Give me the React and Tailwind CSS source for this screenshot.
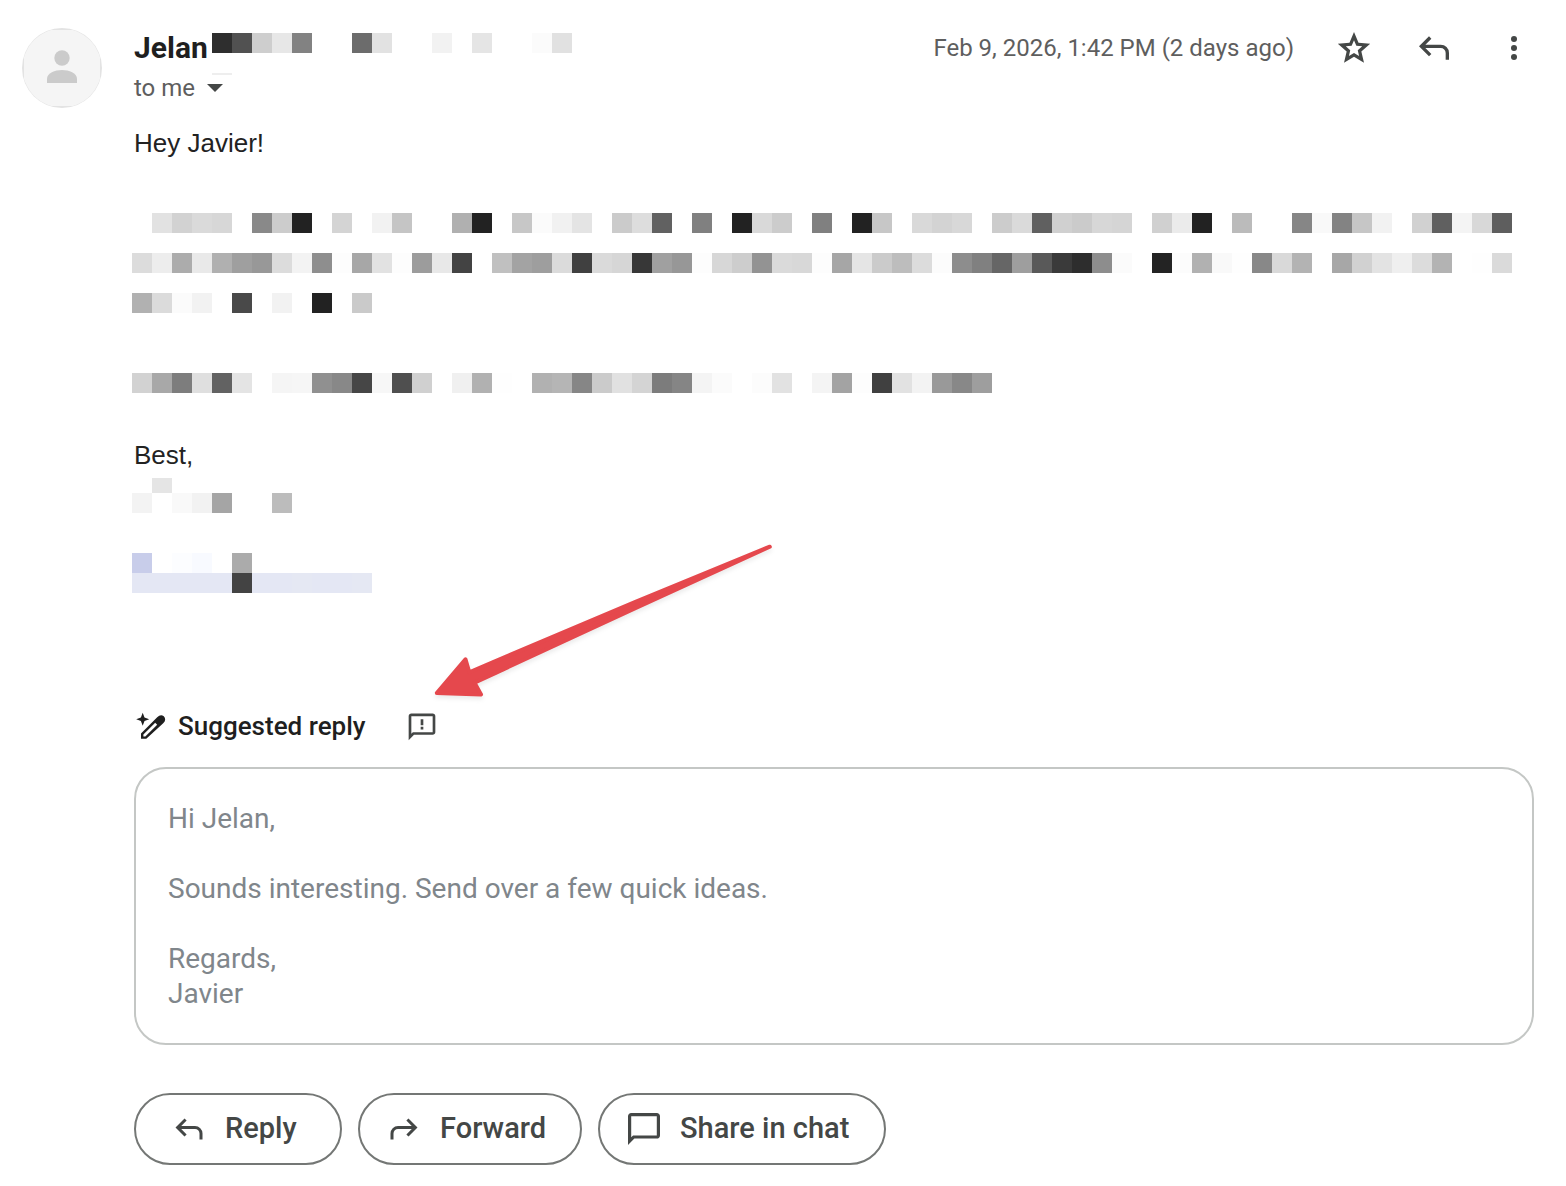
import React from "react";

// One entry per 20px cell, "-" is an empty cell
const senderCells = "2e 51 ce e7 82 - - 6c e2 - - f2 - e5 - - fb e1";

const bodyLines = [
  "- e2 d2 da d7 - 89 cc 22 - d4 - f2 c5 - - b0 22 - c7 fb f1 e4 - cb dd 61 - 80 - 22 d9 cc - 80 - 22 c7 - d9 d3 d8 - cc da 60 d0 cb d7 d5 - d0 eb 22 - bb - - 86 f9 83 c6 f2 - d1 60 f4 d8 5e",
  "dc ed ac e9 b0 9f 98 dc f3 8e fd a7 e2 fd 9c e8 43 - c0 a3 9e db 40 da d6 37 a0 97 fd d7 cd 93 da d8 fd a6 e5 cb bd dc fc 8d 80 66 9e 59 3a 2d 8d fb - 23 fc b1 f9 fe 88 d9 b3 - a7 d1 e3 ef dc b3 - fe da",
  "b1 db fb f2 - 49 - f2 - 22 - ca",
];

const closingLine =
  "d2 a8 7d df 62 e4 - f5 f6 90 88 46 f7 4f d0 - f0 b1 fe - b1 b5 86 cb e1 d4 7c 85 f4 fb - fc e2 - f4 a3 fd 40 e2 f3 99 88 9e";

const linkLines = [
  "c8cdea - fcfdff f8faff - ab",
  "e4e7f4 e4e7f4 e4e7f4 e4e7f4 e4e7f4 43 e4e7f4 e4e7f4 e5e8f3 e4e7f4 e4e7f4 e5e8f3",
];

// Two digit cells are greys, six digit cells are full colours
function cellColor(cell) {
  if (cell === "-") return "transparent";
  return cell.length === 2 ? `#${cell}${cell}${cell}` : `#${cell}`;
}

function RedactedLine({ cells, height = "h-5" }) {
  return (
    <div className={`flex shrink-0 ${height}`} aria-hidden="true">
      {cells.split(" ").map((cell, index) => (
        <span
          key={index}
          className="w-5 shrink-0"
          style={{ backgroundColor: cellColor(cell) }}
        />
      ))}
    </div>
  );
}

function Avatar() {
  return (
    <svg className="w-20 h-20 shrink-0" viewBox="0 0 80 80" aria-hidden="true">
      <clipPath id="avatar-square">
        <rect x="2" y="2" width="76" height="76" />
      </clipPath>
      <circle cx="40" cy="40" r="40" fill="#e3e3e3" />
      <circle
        cx="40"
        cy="40"
        r="39.5"
        fill="#f5f5f5"
        clipPath="url(#avatar-square)"
      />
      <circle cx="40" cy="30" r="7.7" fill="#cbcbcb" />
      <path
        d="M25 55v-4.500c0-5.200 8-8.500 15-8.500s15 3.300 15 8.500V55z"
        fill="#cbcbcb"
      />
    </svg>
  );
}

function StarIcon() {
  return (
    <svg
      className="w-10 h-10"
      viewBox="-15 -940 990 990"
      fill="currentColor"
      aria-hidden="true"
    >
      <path d="m354-247 126-76 126 77-33-144 111-96-146-13-58-136-58 135-146 13 111 97-33 143ZM233-80l65-281L80-550l288-25 112-265 112 265 288 25-218 189 65 281-247-149L233-80Z" />
    </svg>
  );
}

function ReplyIcon({ className }) {
  return (
    <svg
      className={className}
      viewBox="0 -960 960 960"
      fill="currentColor"
      aria-hidden="true"
    >
      <path d="M760-200v-160q0-50-35-85t-85-35H273l144 144-57 56-240-240 240-240 57 56-144 144h367q83 0 141.500 58.500T840-360v160h-80Z" />
    </svg>
  );
}

function MoreIcon() {
  return (
    <svg
      className="w-10 h-10"
      viewBox="0 0 40 40"
      fill="currentColor"
      aria-hidden="true"
    >
      <circle cx="20" cy="10.900" r="3" />
      <circle cx="20" cy="20" r="3" />
      <circle cx="20" cy="29.100" r="3" />
    </svg>
  );
}

function ChatIcon() {
  return (
    <svg
      className="w-10 h-10"
      viewBox="-20 -980 1000 1000"
      fill="currentColor"
      aria-hidden="true"
    >
      <path d="M80-80v-720q0-33 23.500-56.500T160-880h640q33 0 56.500 23.500T880-800v480q0 33-23.500 56.500T800-240H240L80-80Zm126-240h594v-480H160v525l46-45Z" />
    </svg>
  );
}

function FeedbackIcon() {
  return (
    <svg
      className="w-8 h-8"
      viewBox="0 -985 960 960"
      fill="currentColor"
      aria-hidden="true"
    >
      <path d="M80-80v-720q0-33 23.500-56.500T160-880h640q33 0 56.500 23.500T880-800v480q0 33-23.500 56.500T800-240H240L80-80Zm126-240h594v-480H160v525l46-45Z" />
      <path d="M440-710h80v180h-80zM440-480h80v80h-80z" />
    </svg>
  );
}

function PencilSparkIcon() {
  return (
    <svg className="w-8 h-8" viewBox="0 0 32 32" aria-hidden="true">
      <path
        d="M8.700 2.800 10.500 7.500 15.200 9.300 10.500 11.100 8.700 15.800 6.900 11.100 2.200 9.300 6.900 7.500Z"
        fill="currentColor"
      />
      <path
        d="M7 28.700V23.500L23.200 7.300Q26.600 3.900 29.800 6.300 32.800 9.800 29.200 13.200L12.300 28.700Z"
        fill="currentColor"
      />
      <path d="M9.400 26.500V24.600L21.200 12.800 23.200 14.700 11.300 26.500Z" fill="#fff" />
    </svg>
  );
}

// Red pointer drawn over the message, its tip lands on the feedback icon
function PointerArrow() {
  return (
    <svg
      className="absolute -top-44 left-[286px] w-[370px] h-[180px] drop-shadow-[0_3px_2px_rgba(0,0,0,0.08)] pointer-events-none"
      viewBox="0 0 370 180"
      aria-hidden="true"
    >
      <path
        d="M16.800 163 45.500 129.300 49.300 142.300Q200 77.500 349.800 16.700 203 83.500 54.500 152.700L61 164.500Z"
        fill="#e5484d"
        stroke="#e5484d"
        strokeWidth="4"
        strokeLinejoin="round"
      />
    </svg>
  );
}

function ActionButton({ icon, label, className }) {
  return (
    <button
      type="button"
      className={`flex items-center h-[72px] rounded-full border-2 border-[#747775] text-[#444746] text-[29px] font-medium ${className}`}
    >
      {icon}
      {label}
    </button>
  );
}

function MessageHeader() {
  return (
    <header>
      <div className="flex h-10 pl-0.5 text-[#444746]">
        <h3 className="w-[78px] shrink-0 text-[30px] leading-10 font-bold text-[#1f1f1f]">
          Jelan
        </h3>
        <div className="flex flex-col gap-5 pt-[5px]">
          <RedactedLine cells={senderCells} />
          <RedactedLine cells="ee" height="h-0.5" />
        </div>
        <div className="flex items-center gap-10 ml-auto shrink-0">
          <time className="text-[24px] text-[#5e5e5e]">
            Feb 9, 2026, 1:42 PM (2 days ago)
          </time>
          <button type="button" aria-label="Star">
            <StarIcon />
          </button>
          <button type="button" aria-label="Reply">
            <ReplyIcon className="w-10 h-10" />
          </button>
          <button type="button" aria-label="More">
            <MoreIcon />
          </button>
        </div>
      </div>
      <button
        type="button"
        className="flex items-center gap-3 h-10 pl-0.5 text-[24px] text-[#5e5e5e]"
      >
        to me
        <svg className="w-4 h-2" viewBox="0 0 16 8" aria-hidden="true">
          <path d="M0 0h16L8 8z" fill="#444746" />
        </svg>
      </button>
    </header>
  );
}

function MessageBody() {
  return (
    <div className="text-[26px] leading-8 text-[#222222] font-['Liberation_Sans',Arial,sans-serif]">
      <p className="pt-[19px] pl-0.5">Hey Javier!</p>
      <div className="flex flex-col gap-5 mt-[54px]">
        {bodyLines.map((line) => (
          <RedactedLine key={line} cells={line} />
        ))}
      </div>
      <div className="mt-[60px]">
        <RedactedLine cells={closingLine} />
      </div>
      <p className="mt-[46px] pl-0.5">Best,</p>
      <div className="mt-[7px]">
        <RedactedLine cells="- e5" height="h-[15px]" />
        <RedactedLine cells="f3 - f9 f2 a5 - - bc" />
      </div>
      <div className="mt-10">
        {linkLines.map((line) => (
          <RedactedLine key={line} cells={line} />
        ))}
      </div>
    </div>
  );
}

function SuggestedReply() {
  return (
    <section className="mt-[113px] pl-0.5">
      <div className="relative flex items-center h-10 text-[#1f1f1f]">
        <PencilSparkIcon />
        <h4 className="ml-3 text-[26px] font-medium">Suggested reply</h4>
        <button
          type="button"
          aria-label="Send feedback"
          className="ml-10 text-[#444746]"
        >
          <FeedbackIcon />
        </button>
        <PointerArrow />
      </div>
      <button
        type="button"
        className="block w-full mt-[21px] p-8 border-2 border-[#c4c7c5] rounded-[32px] text-left text-[28px] leading-[35px] text-[#80868b]"
      >
        <span className="block">Hi Jelan,</span>
        <span className="block mt-[35px]">
          Sounds interesting. Send over a few quick ideas.
        </span>
        <span className="block mt-[35px]">Regards,</span>
        <span className="block">Javier</span>
      </button>
    </section>
  );
}

export default function App() {
  return (
    <main className="flex gap-[30px] min-h-screen pt-7 pb-5 pl-[22px] pr-8 bg-white font-[Roboto,sans-serif]">
      <Avatar />
      <article className="grow min-w-0">
        <MessageHeader />
        <MessageBody />
        <SuggestedReply />
        <div className="flex gap-4 mt-12 pl-0.5">
          <ActionButton
            icon={<ReplyIcon className="w-9 h-9" />}
            label="Reply"
            className="w-52 gap-[18px] pl-[35px]"
          />
          <ActionButton
            icon={<ReplyIcon className="w-9 h-9 -scale-x-100" />}
            label="Forward"
            className="w-56 gap-[18px] pl-[26px]"
          />
          <ActionButton
            icon={<ChatIcon />}
            label="Share in chat"
            className="w-72 gap-4 pl-6"
          />
        </div>
      </article>
    </main>
  );
}
